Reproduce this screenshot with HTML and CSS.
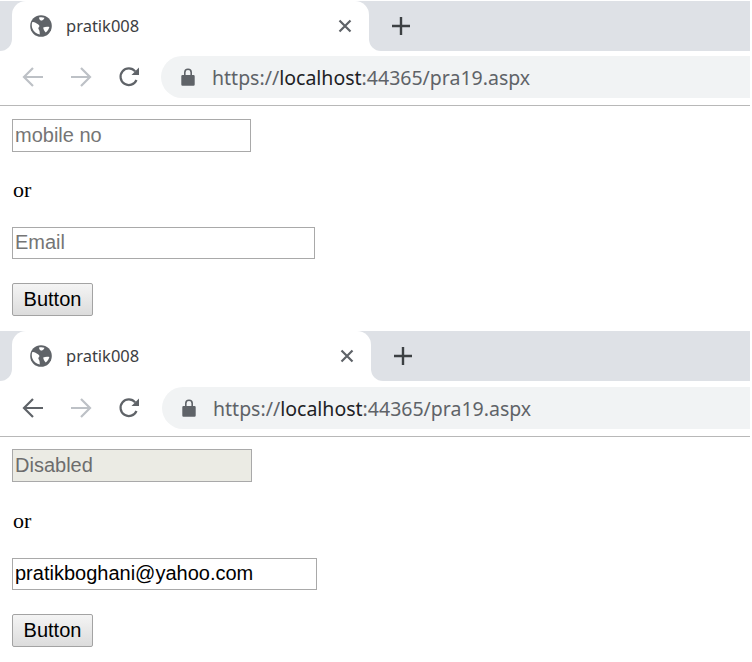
FILE: index.html
```html
<!DOCTYPE html>
<html lang="en">

<head>
    <meta charset="UTF-8">
    <meta name="viewport" content="width=device-width, initial-scale=1.0">
    <title>pratik008</title>
    <link rel="stylesheet" href="styles.css">
</head>

<body>
    <!-- first capture: empty form -->
    <section class="shot shot-first">
        <div class="tabstrip">
            <div class="strip-left"></div>
            <div class="tab">
                <svg class="globe" viewBox="0 0 22 22"><circle cx="11" cy="11" r="10.8" fill="#5f6368"/><path d="M2.2 7.2C4 6.6 6 8 8 9.2 10 10.4 9.6 11.6 8.6 12.6 7.6 13.6 9.4 15 9.6 16.4L9.8 19.4C6.6 19 3.6 16.8 2.4 13.6 1.7 11.4 1.5 9.2 2.2 7.2ZM9 2.6C10.8 2.1 12.8 2.2 14.4 2.8 14.2 4.4 13 5.2 11.6 5.6 10.4 6 9.2 4.6 9 2.6ZM13.2 12.6C15 11.6 17.4 11.4 19.4 12 18.8 14.2 17.6 16 15.8 17.4 14.6 16.4 13.2 14.4 13.2 12.6Z" fill="#fff"/></svg>
                <span class="tab-title">pratik008</span>
                <svg class="tab-close" viewBox="0 0 14 14"><path d="M1.5 1.5 12.5 12.5M12.5 1.5 1.5 12.5"/></svg>
            </div>
            <div class="strip-right">
                <svg class="new-tab" viewBox="0 0 18 18"><path d="M9 0V18M0 9H18"/></svg>
            </div>
        </div>
        <div class="toolbar">
            <svg class="nav-icon off" viewBox="0 0 22 22"><path d="M21 11H2M11 2 2 11 11 20"/></svg>
            <svg class="nav-icon off" viewBox="0 0 22 22"><path d="M1 11H20M11 2 20 11 11 20"/></svg>
            <svg class="nav-icon reload" viewBox="0 0 22 22"><path d="M18.5 14A8.3 8.3 0 1 1 17.2 5.4"/><path class="fill" d="M21 1.5V9H13.5Z"/></svg>
            <div class="omnibox">
                <svg class="lock" viewBox="0 0 14 18"><path d="M2 7H12.5A1.3 1.3 0 0 1 13.7 8.3V16.5A1.3 1.3 0 0 1 12.5 17.8H1.5A1.3 1.3 0 0 1 .3 16.5V8.3A1.3 1.3 0 0 1 1.5 7Z"/><path d="M3 7V4.5A4 4 0 0 1 11 4.5V7H9.4V4.5A2.4 2.4 0 0 0 4.6 4.5V7Z"/></svg>
                <span class="url">https://<b>localhost</b>:44365/pra19.aspx</span>
            </div>
        </div>
        <form class="page">
            <input class="field field-mobile" type="text" placeholder="mobile no">
            <p class="or">or</p>
            <input class="field field-email" type="text" placeholder="Email">
            <button class="btn" type="button">Button</button>
        </form>
    </section>

    <!-- second capture: after typing email -->
    <section class="shot shot-second">
        <div class="tabstrip">
            <div class="strip-left"></div>
            <div class="tab">
                <svg class="globe" viewBox="0 0 22 22"><circle cx="11" cy="11" r="10.8" fill="#5f6368"/><path d="M2.2 7.2C4 6.6 6 8 8 9.2 10 10.4 9.6 11.6 8.6 12.6 7.6 13.6 9.4 15 9.6 16.4L9.8 19.4C6.6 19 3.6 16.8 2.4 13.6 1.7 11.4 1.5 9.2 2.2 7.2ZM9 2.6C10.8 2.1 12.8 2.2 14.4 2.8 14.2 4.4 13 5.2 11.6 5.6 10.4 6 9.2 4.6 9 2.6ZM13.2 12.6C15 11.6 17.4 11.4 19.4 12 18.8 14.2 17.6 16 15.8 17.4 14.6 16.4 13.2 14.4 13.2 12.6Z" fill="#fff"/></svg>
                <span class="tab-title">pratik008</span>
                <svg class="tab-close" viewBox="0 0 14 14"><path d="M1.5 1.5 12.5 12.5M12.5 1.5 1.5 12.5"/></svg>
            </div>
            <div class="strip-right">
                <svg class="new-tab" viewBox="0 0 18 18"><path d="M9 0V18M0 9H18"/></svg>
            </div>
        </div>
        <div class="toolbar">
            <svg class="nav-icon" viewBox="0 0 22 22"><path d="M21 11H2M11 2 2 11 11 20"/></svg>
            <svg class="nav-icon off" viewBox="0 0 22 22"><path d="M1 11H20M11 2 20 11 11 20"/></svg>
            <svg class="nav-icon reload" viewBox="0 0 22 22"><path d="M18.5 14A8.3 8.3 0 1 1 17.2 5.4"/><path class="fill" d="M21 1.5V9H13.5Z"/></svg>
            <div class="omnibox">
                <svg class="lock" viewBox="0 0 14 18"><path d="M2 7H12.5A1.3 1.3 0 0 1 13.7 8.3V16.5A1.3 1.3 0 0 1 12.5 17.8H1.5A1.3 1.3 0 0 1 .3 16.5V8.3A1.3 1.3 0 0 1 1.5 7Z"/><path d="M3 7V4.5A4 4 0 0 1 11 4.5V7H9.4V4.5A2.4 2.4 0 0 0 4.6 4.5V7Z"/></svg>
                <span class="url">https://<b>localhost</b>:44365/pra19.aspx</span>
            </div>
        </div>
        <form class="page">
            <input class="field field-mobile" type="text" value="Disabled" disabled>
            <p class="or">or</p>
            <input class="field field-email" type="text" value="pratikboghani@yahoo.com">
            <button class="btn" type="button">Button</button>
        </form>
    </section>
</body>
</html>
```

FILE: styles.css
```css
body {
    margin: 0;
    width: 750px;
    padding-top: 1px;
    background: #ffffff;
    overflow: hidden;
}

/* top half grey, bottom half white, so the rounded corners flare out of the tab */
.tabstrip {
    display: flex;
    height: 50px;
    background: linear-gradient(#dee1e6 50%, #ffffff 50%);
}

.strip-left {
    width: 12px;
    background: #dee1e6;
    border-bottom-right-radius: 12px;
}

.tab {
    display: flex;
    align-items: center;
    width: 357px;
    padding-left: 18px;
    box-sizing: border-box;
    background: #ffffff;
    border-radius: 14px 14px 0 0;
}

.shot-second .tab {
    width: 359px;
}

.globe {
    width: 22px;
    height: 22px;
    flex: none;
}

.tab-title {
    margin: 0 0 2px 14px;
    font-family: "Noto Sans", sans-serif;
    font-size: 16.5px;
    color: #3c4043;
}

.tab-close {
    width: 14px;
    height: 14px;
    margin-left: auto;
    margin-right: 17px;
    fill: none;
    stroke: #5f6368;
    stroke-width: 2.2;
}

.strip-right {
    flex: 1;
    display: flex;
    align-items: center;
    padding-left: 23px;
    background: #dee1e6;
    border-bottom-left-radius: 12px;
}

.new-tab {
    width: 18px;
    height: 18px;
    fill: none;
    stroke: #3c4043;
    stroke-width: 2.4;
}

.toolbar {
    display: flex;
    align-items: center;
    gap: 26px;
    height: 55px;
    padding: 0 0 2px 22px;
    box-sizing: border-box;
    border-bottom: 1px solid #b8b8b8;
}

.shot-second .toolbar {
    height: 56px;
    padding-bottom: 1px;
}

.nav-icon {
    width: 22px;
    height: 22px;
    flex: none;
    fill: none;
    stroke: #5f6368;
    stroke-width: 2.2;
}

.nav-icon.off {
    stroke: #bdc1c6;
}

.nav-icon .fill {
    fill: #5f6368;
    stroke: none;
}

.omnibox {
    display: flex;
    align-items: center;
    flex: 1;
    height: 42px;
    margin-left: -5px;
    padding-left: 20px;
    background: #f1f3f4;
    border-radius: 21px 0 0 21px;
}

.shot-second .omnibox {
    margin-left: -4px;
}

.lock {
    width: 14px;
    height: 18px;
    flex: none;
    fill: #5f6368;
}

.url {
    margin-left: 17px;
    font-family: "Noto Sans", sans-serif;
    font-size: 19.5px;
    color: #5f6368;
    white-space: nowrap;
}

.url b {
    font-weight: normal;
    color: #202124;
}

.page {
    display: flex;
    flex-direction: column;
    align-items: flex-start;
    height: 225px;
    padding: 13px 0 0 12px;
    box-sizing: border-box;
}

.shot-second .page {
    padding-top: 12px;
}

.field {
    height: 33px;
    padding: 0 2px;
    box-sizing: border-box;
    font-family: "Liberation Sans", Arial, sans-serif;
    font-size: 20px;
    color: #000000;
    background: #ffffff;
    border: 1px solid #a9a9a9;
    border-radius: 0;
    outline: none;
}

.field::placeholder {
    color: #757575;
}

.field:disabled {
    color: #6d6d6d;
    background: #ebebe4;
}

.field-mobile {
    width: 239px;
}

.field-email {
    width: 303px;
    height: 32px;
    padding-bottom: 2px;
}

.shot-second .field-mobile {
    width: 240px;
}

.shot-second .field-email {
    width: 305px;
}

.or {
    height: 24px;
    margin: 26px 0 25px 1px;
    font-family: "Liberation Serif", "Times New Roman", serif;
    font-size: 22px;
    line-height: 24px;
    color: #000000;
}

.shot-second .or {
    margin: 27px 0 25px 1px;
}

.btn {
    width: 81px;
    height: 33px;
    margin-top: 24px;
    padding: 0;
    font-family: "Liberation Sans", Arial, sans-serif;
    font-size: 20px;
    color: #000000;
    background: linear-gradient(#f4f4f4, #dcdcdc);
    border: 1px solid #a3a3a3;
    border-radius: 2px;
}
```
